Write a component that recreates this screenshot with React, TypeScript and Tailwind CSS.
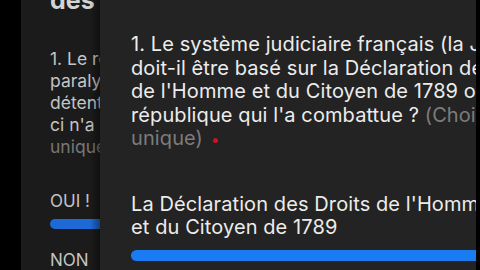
const font = { fontFamily: "Inter, 'Liberation Sans', sans-serif" };

const BackPanel = () => (
  <div className="relative w-[79px] shrink-0 overflow-hidden bg-[#1b1b1b]">
    <div className="w-[400px] pl-[29px]">
      <div className="-mt-[14px] text-[25px] font-bold leading-[28px] text-[#d4d4d4]">
        des questions
      </div>
      <p className="mt-[34px] whitespace-nowrap text-[17.5px] leading-[22px] text-[#c4c4c4]">
        1. Le régime actuel est-il
        <br />
        paralysé par la
        <br />
        détention du pouvoir, et
        <br />
        ci n'a rien changé ?
        <br />
        <span className="text-[#787878]">unique)</span>
      </p>
      <div className="mt-[33px] text-[17px] leading-[20px] text-[#c4c4c4]">OUI !</div>
      <div className="mt-[8px] h-[10px] w-[300px] rounded-full bg-[#1d6ad6]" />
      <div className="mt-[21px] text-[17px] leading-[20px] text-[#c4c4c4]">NON</div>
    </div>
    <div className="absolute inset-y-0 right-0 w-[10px] bg-gradient-to-r from-transparent to-black/40" />
  </div>
);

const FrontPanel = () => (
  <div className="min-w-0 flex-1 overflow-hidden bg-[#232323] shadow-[-6px_0_10px_rgba(0,0,0,0.45)]">
    <div className="pl-[31px] pt-[33px]">
      <p className="whitespace-nowrap text-[20px] leading-[23.5px] tracking-[0.1px] text-[#ececec]">
        1. Le système judiciaire français (la JUSTICE)
        <br />
        doit-il être basé sur la Déclaration des Droits
        <br />
        de l'Homme et du Citoyen de 1789 ou sur la
        <br />
        république qui l'a combattue ? <span className="text-[#7c7c7c]">(Choix</span>
        <br />
        <span className="text-[#7c7c7c]">unique)</span>
        <span className="relative top-[1px] ml-[10px] inline-block h-[5px] w-[5px] rounded-full bg-[#d0102a] align-middle" />
      </p>
      <p className="mt-[42px] whitespace-nowrap text-[20px] leading-[23.5px] tracking-[0.1px] text-[#ececec]">
        La Déclaration des Droits de l'Homme
        <br />
        et du Citoyen de 1789
      </p>
      <div className="mt-[10px] h-[11px] w-[600px] rounded-full bg-[#1b7bf2]" />
    </div>
  </div>
);

export default function App() {
  return (
    <div className="flex h-[270px] w-[480px] overflow-hidden bg-black" style={font}>
      <div className="w-[21px] shrink-0 bg-black" />
      <BackPanel />
      <FrontPanel />
      <div className="w-[4px] shrink-0 bg-black" />
    </div>
  );
}
